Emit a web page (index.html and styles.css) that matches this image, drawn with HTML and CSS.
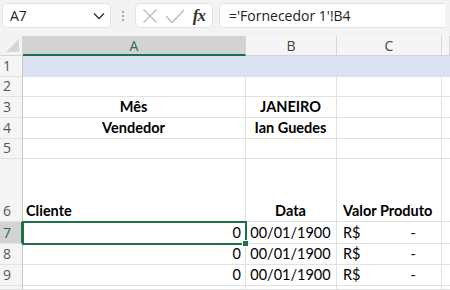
FILE: index.html
```
<!DOCTYPE html>
<html lang="pt-BR">

<head>
    <meta charset="UTF-8">
    <title>Planilha - Vendas</title>
    <link rel="stylesheet" href="styles.css">
</head>

<body>
    <div class="toolbar">
        <div class="name-box">
            <span>A7</span>
            <svg width="12" height="8" viewBox="0 0 12 8"><polyline points="1,1.5 6,6.5 11,1.5" fill="none" stroke="#333" stroke-width="1.3"/></svg>
        </div>
        <div class="dots"><i></i><i></i><i></i></div>
        <div class="fx-box">
            <svg width="16" height="16" viewBox="0 0 16 16"><path d="M1.5 1.5 L14.5 14.5 M14.5 1.5 L1.5 14.5" stroke="#b8b8b8" stroke-width="1.2" fill="none"/></svg>
            <svg width="20" height="16" viewBox="0 0 20 16"><polyline points="1,8 7,14.5 19,2" stroke="#b8b8b8" stroke-width="1.2" fill="none"/></svg>
            <span class="fx">fx</span>
        </div>
        <div class="formula">='Fornecedor 1'!B4</div>
    </div>

    <div class="sheet">
        <div class="corner"><span></span></div>
        <div class="col-head sel">A</div>
        <div class="col-head">B</div>
        <div class="col-head">C</div>
        <div class="col-head last"></div>

        <div class="row-head">1</div>
        <div class="cell band"></div><div class="cell band"></div><div class="cell band"></div><div class="cell band last"></div>

        <div class="row-head">2</div>
        <div class="cell"></div><div class="cell"></div><div class="cell"></div><div class="cell last"></div>

        <div class="row-head">3</div>
        <div class="cell b center">Mês</div><div class="cell b center">JANEIRO</div><div class="cell"></div><div class="cell last"></div>

        <div class="row-head">4</div>
        <div class="cell b center">Vendedor</div><div class="cell b center">Ian Guedes</div><div class="cell"></div><div class="cell last"></div>

        <div class="row-head">5</div>
        <div class="cell"></div><div class="cell"></div><div class="cell"></div><div class="cell last"></div>

        <div class="row-head">6</div>
        <div class="cell b">Cliente</div><div class="cell b center">Data</div><div class="cell b over">Valor Produto</div><div class="cell last"></div>

        <div class="row-head sel">7</div>
        <div class="cell right active">0<span class="handle"></span></div><div class="cell center">00/01/1900</div><div class="cell money"><span>R$</span><span>-</span></div><div class="cell last"></div>

        <div class="row-head">8</div>
        <div class="cell right">0</div><div class="cell center">00/01/1900</div><div class="cell money"><span>R$</span><span>-</span></div><div class="cell last"></div>

        <div class="row-head">9</div>
        <div class="cell right">0</div><div class="cell center">00/01/1900</div><div class="cell money"><span>R$</span><span>-</span></div><div class="cell last"></div>

        <div class="row-head"></div>
        <div class="cell"></div><div class="cell"></div><div class="cell"></div><div class="cell last"></div>
    </div>
</body>

</html>
```

FILE: styles.css
```
body {
    margin: 0;
    width: 450px;
    height: 290px;
    overflow: hidden;
    background: #f3f3f3;
    font-family: "Open Sans", "Noto Sans", sans-serif;
}

.toolbar {
    display: flex;
    align-items: center;
    height: 25px;
    padding: 3px 5px 8px 2px;
    gap: 0;
}

.name-box,
.fx-box,
.formula {
    height: 25px;
    box-sizing: border-box;
    background: #fff;
    border: 1px solid #e3e3e3;
    border-radius: 5px;
    display: flex;
    align-items: center;
}

.name-box {
    width: 109px;
    padding: 0 5px 0 7px;
    justify-content: space-between;
    font-size: 14px;
    color: #222;
}

.dots {
    width: 24px;
    display: flex;
    flex-direction: column;
    align-items: center;
    gap: 2px;
}

.dots i {
    width: 2px;
    height: 2px;
    background: #8a8a8a;
    border-radius: 1px;
}

.fx-box {
    width: 78px;
    padding: 0 4px 0 6px;
    justify-content: space-between;
}

.fx {
    font-family: "Liberation Serif", serif;
    font-style: italic;
    font-weight: bold;
    font-size: 17px;
    color: #333;
    letter-spacing: -1px;
    padding-right: 3px;
}

.formula {
    flex: 1;
    margin-left: 6px;
    padding-left: 9px;
    font-size: 14px;
    color: #222;
    border-right: 0;
    border-radius: 5px 0 0 5px;
}

.sheet {
    display: grid;
    grid-template-columns: 23px 223px 91px 105px 1fr;
    grid-template-rows: 20px 21px 20px 21px 21px 20px 63px 22px 21px 21px 4px;
    background: #fff;
    font-family: "Lato", "Liberation Sans", sans-serif;
    font-size: 14.5px;
    color: #000;
}

.corner {
    background: #f3f3f3;
    border-right: 1px solid #d4d4d4;
    border-bottom: 1px solid #d4d4d4;
    box-sizing: border-box;
    position: relative;
}

.corner span {
    position: absolute;
    right: 3px;
    bottom: 3px;
    width: 0;
    height: 0;
    border-left: 13px solid transparent;
    border-bottom: 13px solid #d6d6d6;
}

.col-head {
    background: #f5f5f5;
    border-right: 1px solid #d8d8d8;
    border-bottom: 1px solid #cfd5e2;
    box-sizing: border-box;
    display: flex;
    align-items: center;
    justify-content: center;
    font-family: "Open Sans", "Noto Sans", sans-serif;
    font-size: 14px;
    color: #444;
}

.col-head.sel {
    background: #d3d3d3;
    color: #1e7145;
    border-bottom: 2px solid #1e7145;
}

.row-head {
    background: #f5f5f5;
    border-right: 1px solid #c8c8c8;
    border-bottom: 1px solid #e2e2e2;
    box-sizing: border-box;
    display: flex;
    align-items: flex-end;
    padding: 0 0 0 3px;
    font-family: "Open Sans", "Noto Sans", sans-serif;
    font-size: 14px;
    line-height: 20px;
    color: #555;
}

.row-head.sel {
    background: #d3d3d3;
    color: #1e7145;
    border-right: 2px solid #1e7145;
}

.cell {
    border-right: 1px solid #e1e1e1;
    border-bottom: 1px solid #e1e1e1;
    box-sizing: border-box;
    display: flex;
    align-items: flex-end;
    padding: 0 4px 1px 3px;
    line-height: 18px;
    white-space: nowrap;
    position: relative;
}

.cell.last {
    border-right: 0;
}

.band {
    background: #d9e1f2;
    border-bottom-color: #d9e1f2;
    border-right-color: #d9e1f2;
}

.b {
    font-weight: bold;
}

.center {
    justify-content: center;
}

.right {
    justify-content: flex-end;
}

.over {
    overflow: visible;
    padding-left: 6px;
}

.money {
    justify-content: space-between;
    padding: 0 25px 1px 6px;
}

.active {
    outline: 2px solid #1e7145;
    outline-offset: -1px;
    z-index: 1;
}

.handle {
    position: absolute;
    right: -4px;
    bottom: -4px;
    width: 5px;
    height: 5px;
    background: #1e7145;
    border: 1px solid #fff;
}
```
